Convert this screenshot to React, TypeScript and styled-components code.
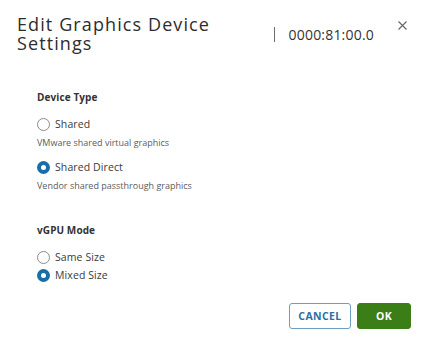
import React, { useState } from "react";
import styled, { createGlobalStyle } from "styled-components";

const GlobalStyle = createGlobalStyle`
    html, body {
        margin: 0;
        padding: 0;
        background: #ffffff;
    }
    body {
        font-family: "Open Sans", "Liberation Sans", sans-serif;
        color: #313131;
    }
`;

const Modal = styled.div`
    width: 428px;
    height: 345px;
    box-sizing: border-box;
    padding: 15px 17px 0 17px;
    display: flex;
    flex-direction: column;
    background: #fff;
`;

const Header = styled.div`
    display: flex;
    align-items: flex-start;
`;

const Title = styled.h3`
    margin: 0;
    width: 240px;
    font-size: 18px;
    line-height: 19px;
    font-weight: 400;
    letter-spacing: 1.1px;
    color: #2d2d2d;
`;

const AddressBlock = styled.div`
    margin-left: auto;
    margin-top: 12px;
    display: flex;
    align-items: center;
    height: 15px;
`;

const Divider = styled.span`
    width: 1px;
    height: 15px;
    background: #6e6e6e;
    margin-right: 14px;
`;

const Address = styled.span`
    font-size: 14px;
    line-height: 15px;
    letter-spacing: 0.2px;
    color: #333;
`;

const CloseButton = styled.button`
    border: none;
    background: none;
    padding: 0;
    margin: 6px 4px 0 24px;
    width: 9px;
    height: 9px;
    display: flex;
    cursor: pointer;
`;

const Body = styled.div`
    padding-left: 20px;
    margin-top: 37px;
    display: flex;
    flex-direction: column;
`;

const SectionLabel = styled.div<{ $gap?: number }>`
    font-size: 10px;
    line-height: 14px;
    font-weight: 700;
    letter-spacing: 0.1px;
    color: #333;
    margin-top: ${(p) => p.$gap ?? 0}px;
    margin-bottom: 11px;
`;

const RadioRow = styled.label<{ $gap?: number }>`
    display: flex;
    align-items: center;
    height: 18px;
    margin-top: ${(p) => p.$gap ?? 0}px;
    cursor: pointer;
`;

const Circle = styled.span<{ $checked: boolean }>`
    box-sizing: border-box;
    width: 13px;
    height: 13px;
    border-radius: 50%;
    border: ${(p) => (p.$checked ? "4.5px solid #1a6ea8" : "1px solid #8a8a8a")};
    background: #fff;
    flex-shrink: 0;
`;

const RadioText = styled.span`
    margin-left: 5px;
    font-size: 10.5px;
    letter-spacing: 0.1px;
    color: #3a3a3a;
`;

const Hint = styled.div`
    font-size: 9px;
    line-height: 12px;
    color: #5c5c5c;
    margin-top: 4px;
    margin-bottom: 9px;
`;

const Footer = styled.div`
    display: flex;
    justify-content: flex-end;
    gap: 6px;
    margin-top: 19px;
`;

const Button = styled.button<{ $primary?: boolean }>`
    height: 26px;
    box-sizing: border-box;
    border-radius: 3px;
    font-family: "Open Sans", "Liberation Sans", sans-serif;
    font-size: 10.5px;
    font-weight: 700;
    letter-spacing: 0.4px;
    cursor: pointer;
    width: ${(p) => (p.$primary ? "54px" : "62px")};
    border: 1px solid ${(p) => (p.$primary ? "#3b7d17" : "#6d9fc3")};
    background: ${(p) => (p.$primary ? "#3b7d17" : "#fff")};
    color: ${(p) => (p.$primary ? "#fff" : "#2f6f9f")};
`;

type Option = { value: string; label: string; hint?: string };

const deviceTypes: Option[] = [
    { value: "shared", label: "Shared", hint: "VMware shared virtual graphics" },
    { value: "direct", label: "Shared Direct", hint: "Vendor shared passthrough graphics" },
];

const modes: Option[] = [
    { value: "same", label: "Same Size" },
    { value: "mixed", label: "Mixed Size" },
];

export default function App() {
    const [deviceType, setDeviceType] = useState("direct");
    const [mode, setMode] = useState("mixed");

    return (
        <>
            <GlobalStyle />
            <Modal>
                <Header>
                    <Title>Edit Graphics Device Settings</Title>
                    <AddressBlock>
                        <Divider />
                        <Address>0000:81:00.0</Address>
                    </AddressBlock>
                    <CloseButton aria-label="Close">
                        <svg width="9" height="9" viewBox="0 0 9 9">
                            <path d="M0.5 0.5 L8.5 8.5 M8.5 0.5 L0.5 8.5" stroke="#666" strokeWidth="1.1" />
                        </svg>
                    </CloseButton>
                </Header>
                <Body>
                    <SectionLabel>Device Type</SectionLabel>
                    {deviceTypes.map((o) => (
                        <React.Fragment key={o.value}>
                            <RadioRow onClick={() => setDeviceType(o.value)}>
                                <Circle $checked={deviceType === o.value} />
                                <RadioText>{o.label}</RadioText>
                            </RadioRow>
                            <Hint>{o.hint}</Hint>
                        </React.Fragment>
                    ))}
                    <SectionLabel $gap={22}>vGPU Mode</SectionLabel>
                    {modes.map((o) => (
                        <RadioRow key={o.value} onClick={() => setMode(o.value)}>
                            <Circle $checked={mode === o.value} />
                            <RadioText>{o.label}</RadioText>
                        </RadioRow>
                    ))}
                </Body>
                <Footer>
                    <Button>CANCEL</Button>
                    <Button $primary>OK</Button>
                </Footer>
            </Modal>
        </>
    );
}
